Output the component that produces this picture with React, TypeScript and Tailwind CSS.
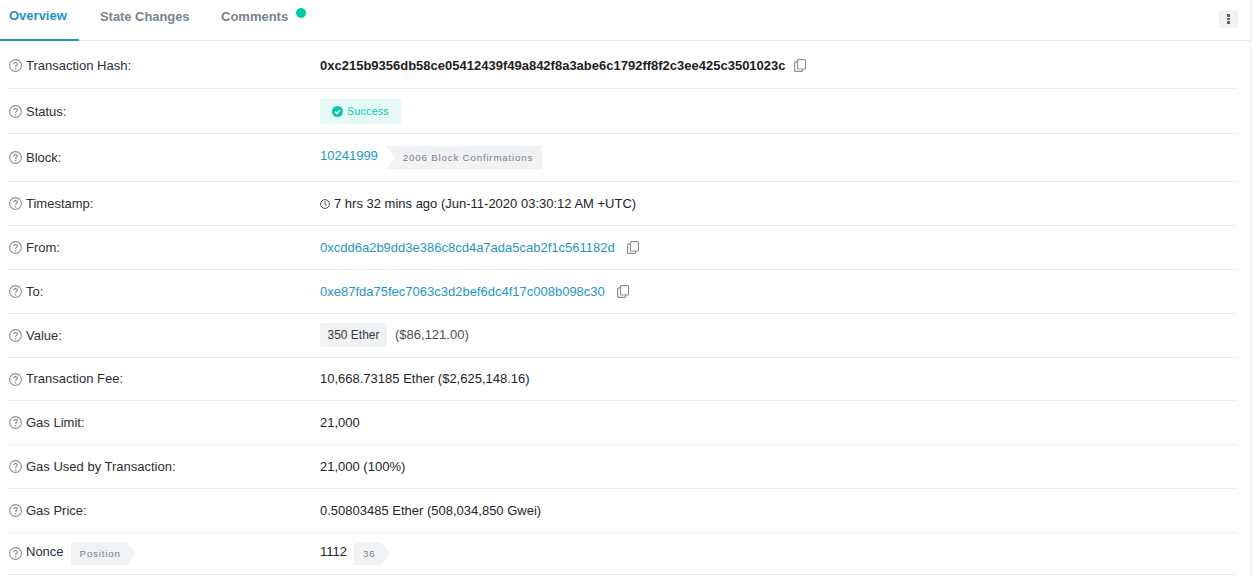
import React from "react";

const Q = () => (
  <svg width="13" height="13" viewBox="0 0 13 13" className="shrink-0">
    <circle cx="6.5" cy="6.5" r="5.9" fill="none" stroke="#8e8e8e" strokeWidth="1.1" />
    <path d="M4.7 5.2c0-1 .8-1.7 1.8-1.7s1.8.7 1.8 1.6c0 1.3-1.7 1.3-1.7 2.8" fill="none" stroke="#7e7e7e" strokeWidth="1.1" />
    <circle cx="6.6" cy="9.7" r=".7" fill="#7e7e7e" />
  </svg>
);

const Copy = () => (
  <svg width="12" height="13" viewBox="0 0 12 13" className="shrink-0">
    <rect x="3.5" y="0.6" width="8" height="9.4" rx="1" fill="#fff" stroke="#8f8f8f" strokeWidth="1.2" />
    <path d="M3.2 2.8H1.6a1 1 0 0 0-1 1v7.6a1 1 0 0 0 1 1h6a1 1 0 0 0 1-1V10" fill="none" stroke="#8f8f8f" strokeWidth="1.2" />
  </svg>
);

function Row({ h, label, badge, labelCls = "", children }: { h: string; label: string; badge?: React.ReactNode; labelCls?: string; children: React.ReactNode }) {
  return (
    <div className={`flex items-center border-b border-[#e9ebee] ${h}`}>
      <div className="flex w-[312px] shrink-0 items-center pl-px">
        <Q />
        <span className={`ml-1 text-[#2b3036] ${labelCls}`}>{label}</span>
        {badge}
      </div>
      <div className="flex items-center text-[#212529]">{children}</div>
    </div>
  );
}

const linkCls = "text-[#1e95c9]";

export default function App() {
  return (
    <div className="h-[576px] w-[1252px] overflow-hidden border-r-2 border-[#f4f4f4] bg-white text-[13px] leading-[18px] [font-family:'Liberation_Sans',Arial,sans-serif]">
      <div className="flex h-[41px] items-start justify-between border-b border-[#e4e6e9] pr-[12px]">
        <div className="flex h-[41px]">
          <div className="flex h-[41px] w-[79px] items-center border-b-2 border-[#2392c8] pb-[7px] pl-[9px] font-bold text-[#2392c8]">Overview</div>
          <div className="flex h-[40px] w-[131px] items-center pb-[6px] pl-[21px] text-[12.9px] font-bold text-[#77838f]">State Changes</div>
          <div className="relative flex h-[40px] items-center pb-[6px] pl-[11px] font-bold text-[#77838f]">
            Comments
            <span className="absolute left-[86px] top-[8px] h-[10px] w-[10px] rounded-full bg-[#00c9a7]" />
          </div>
        </div>
        <div className="mt-[10px] flex h-[18px] w-[19px] flex-col items-center justify-center gap-[1px] rounded-[3px] bg-[#f1f2f4]">
          <span className="h-[2.5px] w-[2.5px] bg-[#5c6670]" />
          <span className="h-[2.5px] w-[2.5px] bg-[#5c6670]" />
          <span className="h-[2.5px] w-[2.5px] bg-[#5c6670]" />
        </div>
      </div>
      <div className="ml-2 mr-[12px]">
        <Row h="h-[48px] pt-[2px]" label="Transaction Hash:">
          <span className="font-bold text-[#1e2022]">0xc215b9356db58ce05412439f49a842f8a3abe6c1792ff8f2c3ee425c3501023c</span>
          <span className="ml-2"><Copy /></span>
        </Row>
        <Row h="h-[45px]" label="Status:" labelCls="mt-px">
          <span className="flex h-[25px] w-[81px] items-center justify-center gap-[4px] rounded-[2px] bg-[#e6f9f6] text-[10.5px] tracking-[0.3px] text-[#00c9a7]">
            <svg width="11" height="11" viewBox="0 0 11 11">
              <circle cx="5.5" cy="5.5" r="5.5" fill="#00c9a7" />
              <path d="M3 5.6l1.8 1.8L8 4" fill="none" stroke="#fff" strokeWidth="1.5" />
            </svg>
            Success
          </span>
        </Row>
        <Row h="h-[48px]" label="Block:">
          <a className={`${linkCls} mb-[3px]`}>10241999</a>
          <span className="ml-[8px] flex h-[23px] w-[156px] items-center bg-[#f1f2f4] pl-[17px] text-[9.75px] tracking-[0.8px] text-[#77838f] [clip-path:polygon(0_0,100%_0,100%_100%,0_100%,9px_50%)]">
            2006 Block Confirmations
          </span>
        </Row>
        <Row h="h-[44px]" label="Timestamp:">
          <svg width="10" height="10" viewBox="0 0 10 10" className="mr-[4px]">
            <circle cx="5" cy="5" r="4.4" fill="none" stroke="#4a4f55" strokeWidth="1" />
            <path d="M5 2.4V5.2l1.8 1" fill="none" stroke="#4a4f55" strokeWidth="1" />
          </svg>
          7 hrs 32 mins ago (Jun-11-2020 03:30:12 AM +UTC)
        </Row>
        <Row h="h-[44px]" label="From:">
          <a className={linkCls}>0xcdd6a2b9dd3e386c8cd4a7ada5cab2f1c561182d</a>
          <span className="ml-3"><Copy /></span>
        </Row>
        <Row h="h-[44px]" label="To:">
          <a className={linkCls}>0xe87fda75fec7063c3d2bef6dc4f17c008b098c30</a>
          <span className="ml-3"><Copy /></span>
        </Row>
        <Row h="h-[44px]" label="Value:">
          <span className="mb-px flex h-[24px] w-[67px] items-center justify-center rounded-[3px] bg-[#f1f2f4] text-[12px] text-[#333a41]">350 Ether</span>
          <span className="ml-2 mb-px text-[#4a4f55]">($86,121.00)</span>
        </Row>
        <Row h="h-[43px]" label="Transaction Fee:">10,668.73185 Ether ($2,625,148.16)</Row>
        <Row h="h-[44px]" label="Gas Limit:">21,000</Row>
        <Row h="h-[44px]" label="Gas Used by Transaction:">21,000 (100%)</Row>
        <Row h="h-[44px]" label="Gas Price:">0.50803485 Ether (508,034,850 Gwei)</Row>
        <Row
          h="h-[42px]"
          label="Nonce"
          labelCls="mb-[3px]"
          badge={
            <span className="ml-[7px] flex h-[23px] w-[65px] items-center bg-[#f1f2f4] pl-[9px] text-[9.75px] tracking-[0.8px] text-[#77838f] [clip-path:polygon(0_0,calc(100%-9px)_0,100%_50%,calc(100%-9px)_100%,0_100%)]">
              Position
            </span>
          }
        >
          <span className="mb-[3px]">1112</span>
          <span className="ml-[7px] flex h-[23px] w-[36px] items-center bg-[#f1f2f4] pl-[9px] text-[9.75px] tracking-[0.8px] text-[#77838f] [clip-path:polygon(0_0,calc(100%-9px)_0,100%_50%,calc(100%-9px)_100%,0_100%)]">
            36
          </span>
        </Row>
      </div>
    </div>
  );
}
